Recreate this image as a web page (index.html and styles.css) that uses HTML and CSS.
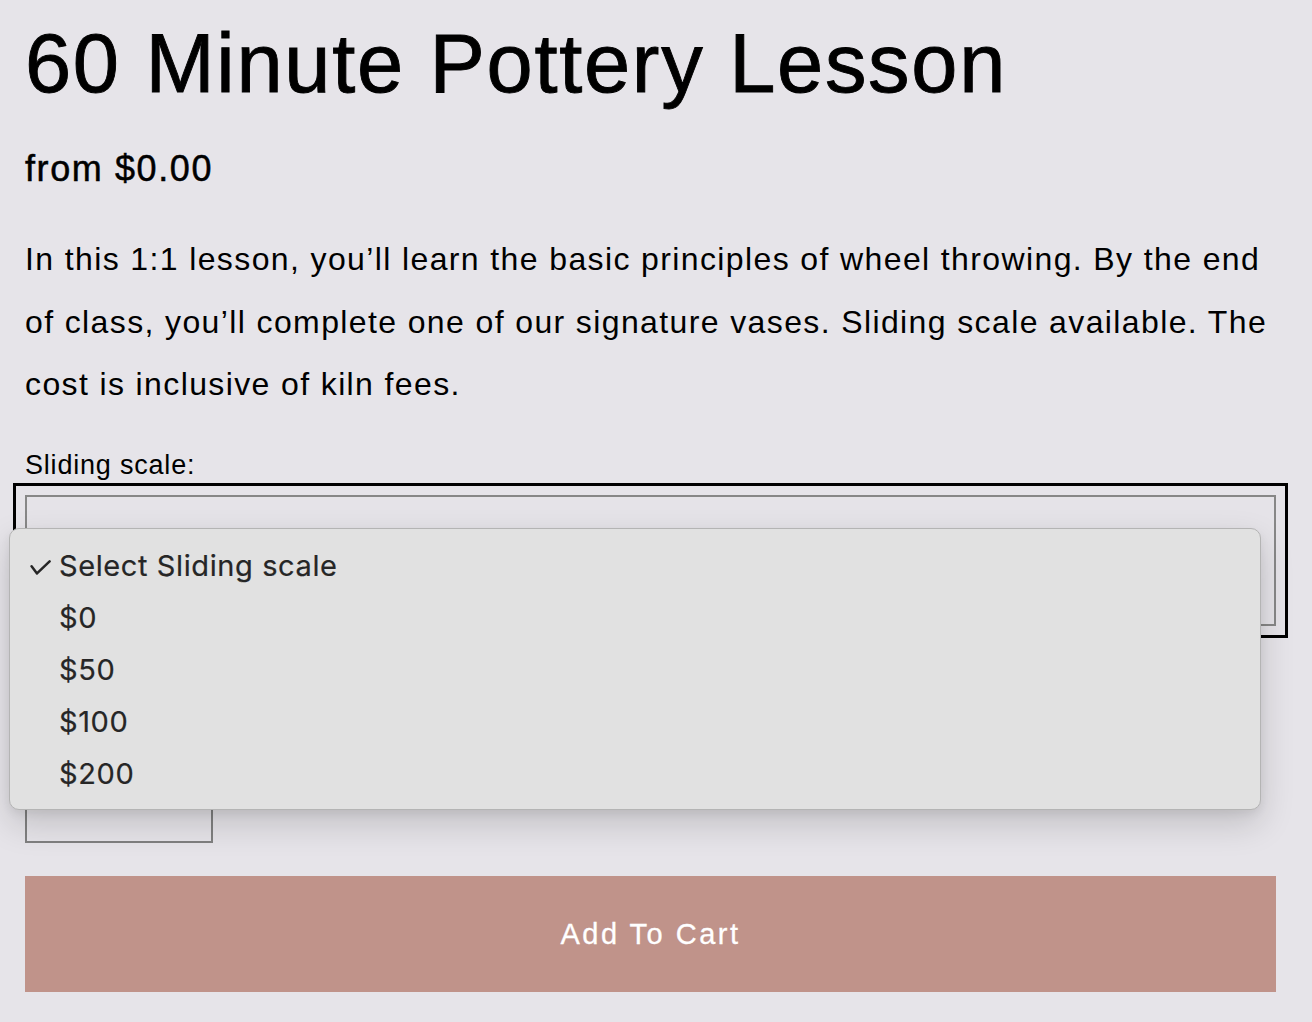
FILE: index.html
```html
<!DOCTYPE html>
<html lang="en">
<head>
<meta charset="utf-8">
<title>60 Minute Pottery Lesson</title>
<link rel="stylesheet" href="styles.css">
</head>
<body>
<main class="product">
  <h1 class="title">60 Minute Pottery Lesson</h1>
  <div class="price">from $0.00</div>
  <p class="desc">In this 1:1 lesson, you’ll learn the basic principles of wheel throwing. By the end of class, you’ll complete one of our signature vases. Sliding scale available. The cost is inclusive of kiln fees.</p>

  <div class="field">
    <label class="label" for="scale">Sliding scale:</label>
    <div class="select-wrap">
      <div class="select" id="scale" tabindex="0"></div>
      <ul class="menu">
        <li class="item selected"><span class="check"><svg width="21" height="15" viewBox="0 0 21 15"><polyline points="1.6,6.2 7,13.4 19.6,1.4" fill="none" stroke="#262626" stroke-width="2.5" stroke-linecap="round" stroke-linejoin="round"/></svg></span>Select Sliding scale</li>
        <li class="item"><span class="check"></span>$0</li>
        <li class="item"><span class="check"></span>$50</li>
        <li class="item"><span class="check"></span>$100</li>
        <li class="item"><span class="check"></span>$200</li>
      </ul>
    </div>
  </div>

  <div class="field qty">
    <div class="qty-input" id="qty" aria-label="Quantity"></div>
  </div>

  <button class="cart" type="button">Add To Cart</button>
</main>
</body>
</html>
```

FILE: styles.css
```css
html, body {
  margin: 0;
  padding: 0;
  background: #e6e4e9;
}

body {
  font-family: "Liberation Sans", Arial, Helvetica, sans-serif;
  color: #000;
}

.product {
  padding: 22px 36px 0 25px;
}

.title {
  margin: 0;
  font-size: 83px;
  line-height: 83px;
  font-weight: 400;
  letter-spacing: 1.7px;
  -webkit-text-stroke: 0.9px #000;
}

.price {
  margin-top: 46px;
  font-size: 36px;
  line-height: 36px;
  letter-spacing: 1.6px;
  -webkit-text-stroke: 0.5px #000;
}

.desc {
  margin: 41px 0 0;
  font-size: 32px;
  line-height: 62.7px;
  letter-spacing: 1.38px;
}

.field {
  display: flex;
  flex-direction: column;
}

.label {
  margin-top: 36px;
  font-size: 27px;
  line-height: 27px;
  letter-spacing: 0.8px;
}

.select-wrap {
  position: relative;
  margin-top: 16px;
}

.select {
  height: 127px;
  border: 2px solid #878787;
  outline: 3px solid #000;
  outline-offset: 9px;
  background: #e5e3e8;
}

.menu {
  position: absolute;
  left: -16px;
  top: 33px;
  width: 1252px;
  height: 282px;
  margin: 0;
  padding: 11px 0 0;
  box-sizing: border-box;
  list-style: none;
  background: #e1e1e1;
  border: 1px solid #b4b4b4;
  border-radius: 10px;
  box-shadow: 0 14px 34px rgba(0, 0, 0, 0.16), 0 4px 10px rgba(0, 0, 0, 0.06);
  z-index: 2;
}

.item {
  display: flex;
  align-items: center;
  height: 52px;
  padding-left: 20px;
  font-family: Inter, "Liberation Sans", sans-serif;
  font-size: 29px;
  line-height: 52px;
  letter-spacing: 0.6px;
  color: #262626;
  -webkit-text-stroke: 0.2px #262626;
}

.check {
  display: flex;
  align-items: center;
  width: 29px;
  flex: none;
  padding-top: 3px;
}

.qty-input {
  margin-top: 103px;
  width: 184px;
  height: 110px;
  border: 2px solid #808080;
}

.cart {
  display: block;
  width: 100%;
  height: 116px;
  margin-top: 33px;
  border: 0;
  padding: 0;
  background: #c0938a;
  color: #fff;
  font-family: "Liberation Sans", Arial, sans-serif;
  font-size: 29px;
  letter-spacing: 2.5px;
  -webkit-text-stroke: 0.3px #fff;
}
```
